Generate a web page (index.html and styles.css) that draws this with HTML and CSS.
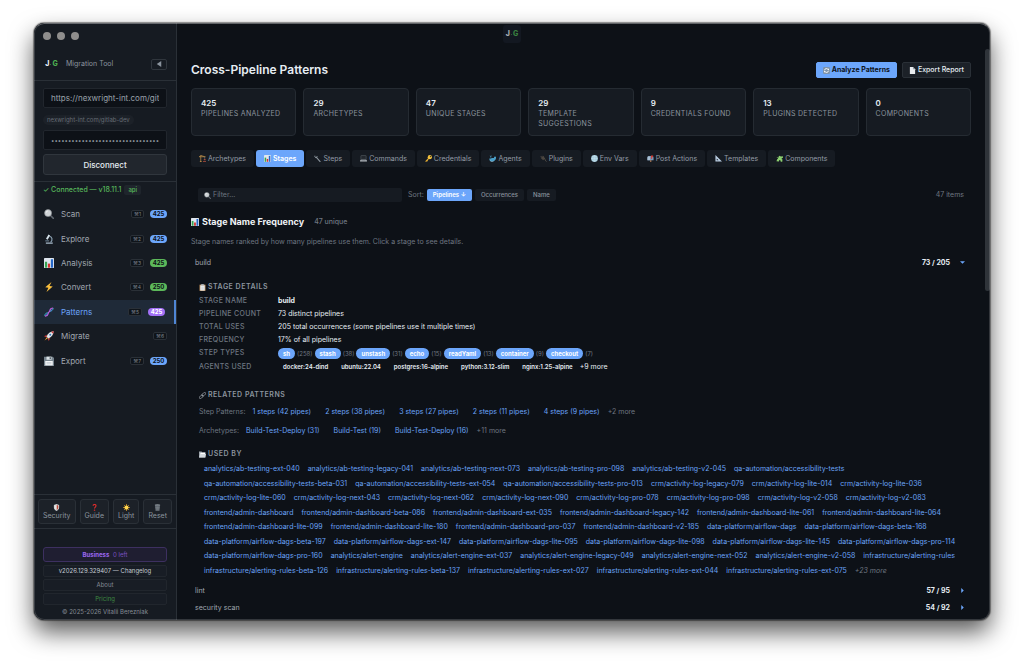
FILE: index.html
```html
<!DOCTYPE html>
<html lang="en">
<head>
<meta charset="utf-8">
<title>Migration Tool</title>
<meta name="viewport" content="width=device-width, initial-scale=1">
<link rel="stylesheet" href="styles.css">
</head>
<body>
<svg class="sprite" aria-hidden="true">
  <symbol id="i-search" viewBox="0 0 16 16"><path d="M10 10l5 5" stroke="#5f666e" stroke-width="2.4" stroke-linecap="round"/><circle cx="6.5" cy="6.5" r="5.6" fill="#cfd3d6" stroke="#8d9297" stroke-width="1"/><path d="M3.5 6a3 3 0 0 1 3-3" stroke="#fff" fill="none"/></symbol>
  <symbol id="i-micro" viewBox="0 0 16 16"><path d="M3 14.5h11" stroke="#a9bccb" stroke-width="2"/><path d="M9 3.5c4 1 5.500 6.500 1.500 10" stroke="#8fa6b8" stroke-width="1.800" fill="none"/><path d="M8.500 1.500l-4 7" stroke="#d6e2ea" stroke-width="3"/><path d="M2 11h6" stroke="#71899c" stroke-width="1.500"/></symbol>
  <symbol id="i-chart" viewBox="0 0 16 16"><rect width="16" height="16" rx="1" fill="#dfe6ee"/><rect x="1.500" y="6" width="3.500" height="9.500" fill="#35a552"/><rect x="6.200" y="9" width="3.500" height="6.500" fill="#d6322f"/><rect x="11" y="2" width="3.500" height="13.500" fill="#2467c9"/></symbol>
  <symbol id="i-bolt" viewBox="0 0 16 16"><path d="M12 0L2 8.500l5 .6L4 16l10-9-5.200-.7z" fill="#fbbf3c"/></symbol>
  <symbol id="i-dna" viewBox="0 0 16 16"><path d="M1.500 14.500C1 8.500 6 10.500 8 8s6.500-1 6.500-6.500" stroke="#35b5d8" stroke-width="1.600" fill="none"/><path d="M1.500 14.500C8 15 5.500 10 8 8s0-6.500 6.500-6.500" stroke="#c45bd8" stroke-width="1.800" fill="none"/><path d="M3 11.500l2.500 2M10.500 3.500l2.500 2M9 5.500l2.500 1.700M4.500 10l2 1.700" stroke="#6a8cf5"/></symbol>
  <symbol id="i-rocket" viewBox="0 0 16 16"><path d="M4 7L1 8.500l3 1zM9 12l-1.500 3-1-3z" fill="#d13a3a" stroke="#d13a3a"/><path d="M15.500.5C10 1 6 4 4 9l3 3c5-2 8-6 8.500-11.500z" fill="#e3e7ea"/><path d="M15.500.5c-1.500.1-3 .5-4 1l3 3c.5-1.300.9-2.500 1-4z" fill="#d13a3a"/><circle cx="10" cy="6" r="1.600" fill="#3679b8"/><path d="M4.500 10L1 15l5-3.500z" fill="#f9a82c"/></symbol>
  <symbol id="i-disk" viewBox="0 0 16 16"><path d="M0 1h14l2 2v13H0z" fill="#76838d"/><rect x="4" y="1" width="8" height="5" fill="#dce3e8"/><rect x="9" y="2" width="2" height="3" fill="#4b565e"/><rect x="2" y="8" width="12" height="7" fill="#f4f6f7"/><path d="M4 10.500h8M4 12.500h8" stroke="#b4bec5"/></symbol>
  <symbol id="i-shield" viewBox="0 0 16 16"><path d="M8 0l6 2v6c0 4-3 6.500-6 8-3-1.500-6-4-6-8V2z" fill="#cdd2d6"/><path d="M8 2l4 1.300V8c0 3-2 4.800-4 6z" fill="#bb4433"/><path d="M8 2L4 3.300V8c0 3 2 4.800 4 6z" fill="#e9e4e0"/></symbol>
  <symbol id="i-question" viewBox="0 0 16 16"><path d="M5 4c0-4 6.500-3.500 6.500 0 0 3-3.500 3-3.500 6.500" stroke="#e12d2d" stroke-width="2.600" fill="none"/><circle cx="8" cy="14" r="1.700" fill="#e12d2d"/></symbol>
  <symbol id="i-sun" viewBox="0 0 16 16"><path d="M8 0v16M0 8h16M2.500 2.500l11 11M13.500 2.500l-11 11" stroke="#f6a623" stroke-width="1.500"/><circle cx="8" cy="8" r="4.600" fill="#ffd54d"/></symbol>
  <symbol id="i-trash" viewBox="0 0 16 16"><path d="M2 2h12l-1.500 14h-9z" fill="#596068"/><ellipse cx="8" cy="2" rx="6.500" ry="1.600" fill="#8c949b"/><path d="M5 5l.5 9M8 5v9M11 5l-.5 9M3 8h10M3.500 11h9" stroke="#858d94" stroke-width=".8"/></symbol>
  <symbol id="i-refresh" viewBox="0 0 16 16"><rect width="16" height="16" rx="3" fill="#7d93ab"/><path d="M3.500 7.500A4.500 4.500 0 0 1 12 6M12.500 8.500A4.500 4.500 0 0 1 4 10" stroke="#fff" stroke-width="2" fill="none"/><path d="M13.500 3v4h-4zM2.500 13V9h4z" fill="#fff"/></symbol>
  <symbol id="i-page" viewBox="0 0 16 16"><path d="M2 0h7l5 5v11H2z" fill="#e9ecef"/><path d="M9 0v5h5z" fill="#9aa2aa"/></symbol>
  <symbol id="i-crane" viewBox="0 0 16 16"><path d="M4 15V1M0 4h15M4 1l9 3M4 1L1 4" stroke="#bd8f4a" stroke-width="1.700" fill="none"/><path d="M13 4v5" stroke="#909498"/><path d="M2 15h4" stroke="#c49247" stroke-width="2"/><rect x="11" y="9" width="4" height="3" fill="#a54c3d"/><path d="M9 15h7" stroke="#a54c3d" stroke-width="2"/></symbol>
  <symbol id="i-wrench" viewBox="0 0 16 16"><path d="M5 5l9 10" stroke="#8d969e" stroke-width="2.400" stroke-linecap="round"/><path d="M2 1.500v3l2.500 2L7 5V2.500" stroke="#8d969e" stroke-width="2" fill="none"/></symbol>
  <symbol id="i-laptop" viewBox="0 0 16 16"><rect x="2" y="1" width="12" height="9" rx="1" fill="#23282e" stroke="#69727a"/><path d="M1 11h14l1 4H0z" fill="#b5bbc0"/><path d="M3 12.500h10" stroke="#59616a"/></symbol>
  <symbol id="i-key" viewBox="0 0 16 16"><path d="M9 7l-7.500 8M4 12l2 2" stroke="#e6ad31" stroke-width="2.800"/><circle cx="11" cy="5" r="4.800" fill="#f4c23d"/><circle cx="12.300" cy="3.700" r="1.300" fill="#161b22"/></symbol>
  <symbol id="i-whale" viewBox="0 0 16 16"><path d="M1 8c4 1 5-2 9-1 2 .5 2-2 1-3 3 0 5 1 5-1 1 4-1 12-9 12C3 15 0 12 1 8z" fill="#4b9fc8"/><path d="M2 12c3 3 7 2 9 1-2 3-7 3-9-1z" fill="#d8edf6"/><path d="M4 6V3M2 2l2 1 2-1" stroke="#62b8df" stroke-width="1.300" fill="none"/></symbol>
  <symbol id="i-plug" viewBox="0 0 16 16"><path d="M1 5l3-3M4 8l4-5" stroke="#695f58" stroke-width="1.500"/><path d="M2 6l5-4 5 6-5 4z" fill="#4b453f"/><path d="M10 9c4 1 1 5 5 6" stroke="#6b6259" stroke-width="1.500" fill="none"/></symbol>
  <symbol id="i-globe" viewBox="0 0 16 16"><circle cx="8" cy="8" r="7.800" fill="#9fc6da"/><path d="M.5 8h15M8 .5v15M2 4h12M2 12h12" stroke="#d9edf5" stroke-width=".7"/><ellipse cx="8" cy="8" rx="4" ry="7.500" fill="none" stroke="#d9edf5" stroke-width=".7"/></symbol>
  <symbol id="i-mail" viewBox="0 0 16 16"><path d="M7 9h3v7H7z" fill="#9b6c4c"/><path d="M1 6a4 4 0 0 1 4-4h6a4 4 0 0 1 4 4v6H1z" fill="#7896b5"/><path d="M1 12V6a3 3 0 0 1 6 0v6z" fill="#a9c0d4"/><path d="M9 9V1h5v4h-3v4z" fill="#d33f35"/></symbol>
  <symbol id="i-ruler" viewBox="0 0 16 16"><path fill-rule="evenodd" d="M1 0l15 15H1zm3 8v4h4z" fill="#b8cce0"/></symbol>
  <symbol id="i-puzzle" viewBox="0 0 16 16"><path d="M2 4l4 2c-1-4 4-6 5-2l4-2 1 5c-4-1-4 3-1 3l-1 6-4-2c1-4-4-3-3 1l-6-1 2-5c3 0 2-4-1-3z" fill="#8cd070"/></symbol>
  <symbol id="i-clip" viewBox="0 0 16 16"><rect x="1" y="1" width="14" height="15" rx="1" fill="#a77e50"/><rect x="3" y="3" width="10" height="12" fill="#f1f3f4"/><rect x="5" width="6" height="3" fill="#9fa6ac"/><path d="M5 7h6M5 9.500h6M5 12h6" stroke="#b1b8be"/></symbol>
  <symbol id="i-link" viewBox="0 0 16 16"><rect x="6" y="2.500" width="10" height="5" rx="2.500" transform="rotate(-45 11 5)" fill="none" stroke="#abb3ba" stroke-width="1.600"/><rect x="0" y="8.500" width="10" height="5" rx="2.500" transform="rotate(-45 5 11)" fill="none" stroke="#abb3ba" stroke-width="1.600"/></symbol>
  <symbol id="i-folder" viewBox="0 0 16 16"><path d="M0 1h6l1 2h8v12H0z" fill="#9da5ac"/><path d="M3 4h11v5H3z" fill="#fff"/><path d="M3 7h13l-2 8H0z" fill="#d5dade"/></symbol>
</svg>

<div class="window">
  <aside class="sidebar">
    <div class="traffic"><span></span><span></span><span></span></div>
    <div class="brand">
      <span class="logo"><b>J</b><i></i><b class="g">G</b></span>
      <span class="brand-name">Migration Tool</span>
      <button class="collapse" aria-label="Collapse sidebar"><svg viewBox="0 0 8 8"><path d="M7 0v8L1 4z"/></svg></button>
    </div>
    <form class="connection">
      <input class="field" type="text" aria-label="GitLab URL" value="https://nexwright-int.com/gitlab-dev">
      <span class="host">nexwright-int.com/gitlab-dev</span>
      <input class="field secret" type="password" aria-label="Access token" value="aaaaaaaaaaaaaaaaaaaaaaaaaaaaaaaaaaaaaaaaaaaaaaaa">
      <button class="disconnect" type="button">Disconnect</button>
    </form>
    <div class="status">✓ Connected — v18.11.1 <span>api</span></div>
    <nav class="nav">
      <a href="#scan"><svg><use href="#i-search"/></svg><span>Scan</span><kbd>⌘1</kbd><em class="blue">425</em></a>
      <a href="#explore"><svg><use href="#i-micro"/></svg><span>Explore</span><kbd>⌘2</kbd><em class="blue">425</em></a>
      <a href="#analysis"><svg><use href="#i-chart"/></svg><span>Analysis</span><kbd>⌘3</kbd><em class="green">425</em></a>
      <a href="#convert"><svg><use href="#i-bolt"/></svg><span>Convert</span><kbd>⌘4</kbd><em class="green">250</em></a>
      <a href="#patterns" class="active" aria-current="page"><svg><use href="#i-dna"/></svg><span>Patterns</span><kbd>⌘5</kbd><em class="purple">425</em></a>
      <a href="#migrate"><svg><use href="#i-rocket"/></svg><span>Migrate</span><kbd>⌘6</kbd></a>
      <a href="#export"><svg><use href="#i-disk"/></svg><span>Export</span><kbd>⌘7</kbd><em class="blue">250</em></a>
    </nav>
    <div class="tools">
      <button><svg><use href="#i-shield"/></svg>Security</button>
      <button><svg><use href="#i-question"/></svg>Guide</button>
      <button><svg><use href="#i-sun"/></svg>Light</button>
      <button><svg><use href="#i-trash"/></svg>Reset</button>
    </div>
    <footer class="about">
      <button class="plan"><b>Business</b> 0 left</button>
      <a class="version" href="#changelog">v2026.129.329407 — Changelog</a>
      <a href="#about">About</a>
      <a class="pricing" href="#pricing">Pricing</a>
      <small>© 2025-2026 Vitalii Berezniak</small>
    </footer>
  </aside>

  <main class="main">
    <header class="page-head">
      <h1>Cross-Pipeline Patterns</h1>
      <button class="btn primary"><svg><use href="#i-refresh"/></svg>Analyze Patterns</button>
      <button class="btn"><svg><use href="#i-page"/></svg>Export Report</button>
    </header>

    <section class="cards">
      <div><strong>425</strong><span>Pipelines Analyzed</span></div>
      <div><strong>29</strong><span>Archetypes</span></div>
      <div><strong>47</strong><span>Unique Stages</span></div>
      <div><strong>29</strong><span>Template Suggestions</span></div>
      <div><strong>9</strong><span>Credentials Found</span></div>
      <div><strong>13</strong><span>Plugins Detected</span></div>
      <div><strong>0</strong><span>Components</span></div>
    </section>

    <div class="tabs">
      <button><svg><use href="#i-crane"/></svg>Archetypes</button>
      <button class="on"><svg><use href="#i-chart"/></svg>Stages</button>
      <button><svg><use href="#i-wrench"/></svg>Steps</button>
      <button><svg><use href="#i-laptop"/></svg>Commands</button>
      <button><svg><use href="#i-key"/></svg>Credentials</button>
      <button><svg><use href="#i-whale"/></svg>Agents</button>
      <button><svg><use href="#i-plug"/></svg>Plugins</button>
      <button><svg><use href="#i-globe"/></svg>Env Vars</button>
      <button><svg><use href="#i-mail"/></svg>Post Actions</button>
      <button><svg><use href="#i-ruler"/></svg>Templates</button>
      <button><svg><use href="#i-puzzle"/></svg>Components</button>
    </div>

    <div class="toolbar">
      <label class="filter"><svg><use href="#i-search"/></svg><input type="text" placeholder="Filter..." aria-label="Filter"></label>
      <span class="sort-label">Sort:</span>
      <button class="on">Pipelines ↓</button>
      <button>Occurrences</button>
      <button>Name</button>
      <span class="total">47 items</span>
    </div>

    <div class="section-head">
      <svg><use href="#i-chart"/></svg>
      <h2>Stage Name Frequency</h2>
      <span>47 unique</span>
    </div>
    <p class="intro">Stage names ranked by how many pipelines use them. Click a stage to see details.</p>

    <div class="stage"><span>build</span><b>73 / 205</b><svg viewBox="0 0 8 8"><path d="M0 2h8L4 6z"/></svg></div>

    <div class="detail">
      <h3><svg><use href="#i-clip"/></svg>Stage Details</h3>
      <dl>
        <dt>Stage Name</dt><dd><b>build</b></dd>
        <dt>Pipeline Count</dt><dd>73 distinct pipelines</dd>
        <dt>Total Uses</dt><dd>205 total occurrences (some pipelines use it multiple times)</dd>
        <dt>Frequency</dt><dd>17% of all pipelines</dd>
        <dt>Step Types</dt>
        <dd class="types"><mark>sh</mark><i>(258)</i><mark>stash</mark><i>(38)</i><mark>unstash</mark><i>(31)</i><mark>echo</mark><i>(15)</i><mark>readYaml</mark><i>(13)</i><mark>container</mark><i>(9)</i><mark>checkout</mark><i>(7)</i></dd>
        <dt>Agents Used</dt>
        <dd class="agents"><b>docker:24-dind</b><b>ubuntu:22.04</b><b>postgres:16-alpine</b><b>python:3.12-slim</b><b>nginx:1.25-alpine</b><span>+9 more</span></dd>
      </dl>

      <h3 class="related-head"><svg><use href="#i-link"/></svg>Related Patterns</h3>
      <div class="related"><span>Step Patterns:</span><a href="#p1">1 steps (42 pipes)</a><a href="#p2">2 steps (38 pipes)</a><a href="#p3">3 steps (27 pipes)</a><a href="#p4">2 steps (11 pipes)</a><a href="#p5">4 steps (9 pipes)</a><em>+2 more</em></div>
      <div class="related"><span>Archetypes:</span><a href="#a1">Build-Test-Deploy (31)</a><a href="#a2">Build-Test (19)</a><a href="#a3">Build-Test-Deploy (16)</a><em>+11 more</em></div>

      <h3 class="used-head"><svg><use href="#i-folder"/></svg>Used By</h3>
      <div class="used">
        <a href="#u">analytics/ab-testing-ext-040</a>
        <a href="#u">analytics/ab-testing-legacy-041</a>
        <a href="#u">analytics/ab-testing-next-073</a>
        <a href="#u">analytics/ab-testing-pro-098</a>
        <a href="#u">analytics/ab-testing-v2-045</a>
        <a href="#u">qa-automation/accessibility-tests</a>
        <a href="#u">qa-automation/accessibility-tests-beta-031</a>
        <a href="#u">qa-automation/accessibility-tests-ext-054</a>
        <a href="#u">qa-automation/accessibility-tests-pro-013</a>
        <a href="#u">crm/activity-log-legacy-079</a>
        <a href="#u">crm/activity-log-lite-014</a>
        <a href="#u">crm/activity-log-lite-036</a>
        <a href="#u">crm/activity-log-lite-060</a>
        <a href="#u">crm/activity-log-next-043</a>
        <a href="#u">crm/activity-log-next-062</a>
        <a href="#u">crm/activity-log-next-090</a>
        <a href="#u">crm/activity-log-pro-078</a>
        <a href="#u">crm/activity-log-pro-098</a>
        <a href="#u">crm/activity-log-v2-058</a>
        <a href="#u">crm/activity-log-v2-083</a>
        <a href="#u">frontend/admin-dashboard</a>
        <a href="#u">frontend/admin-dashboard-beta-086</a>
        <a href="#u">frontend/admin-dashboard-ext-035</a>
        <a href="#u">frontend/admin-dashboard-legacy-142</a>
        <a href="#u">frontend/admin-dashboard-lite-061</a>
        <a href="#u">frontend/admin-dashboard-lite-064</a>
        <a href="#u">frontend/admin-dashboard-lite-099</a>
        <a href="#u">frontend/admin-dashboard-lite-180</a>
        <a href="#u">frontend/admin-dashboard-pro-037</a>
        <a href="#u">frontend/admin-dashboard-v2-185</a>
        <a href="#u">data-platform/airflow-dags</a>
        <a href="#u">data-platform/airflow-dags-beta-168</a>
        <a href="#u">data-platform/airflow-dags-beta-197</a>
        <a href="#u">data-platform/airflow-dags-ext-147</a>
        <a href="#u">data-platform/airflow-dags-lite-095</a>
        <a href="#u">data-platform/airflow-dags-lite-098</a>
        <a href="#u">data-platform/airflow-dags-lite-145</a>
        <a href="#u">data-platform/airflow-dags-pro-114</a>
        <a href="#u">data-platform/airflow-dags-pro-160</a>
        <a href="#u">analytics/alert-engine</a>
        <a href="#u">analytics/alert-engine-ext-037</a>
        <a href="#u">analytics/alert-engine-legacy-049</a>
        <a href="#u">analytics/alert-engine-next-052</a>
        <a href="#u">analytics/alert-engine-v2-058</a>
        <a href="#u">infrastructure/alerting-rules</a>
        <a href="#u">infrastructure/alerting-rules-beta-126</a>
        <a href="#u">infrastructure/alerting-rules-beta-137</a>
        <a href="#u">infrastructure/alerting-rules-ext-027</a>
        <a href="#u">infrastructure/alerting-rules-ext-044</a>
        <a href="#u">infrastructure/alerting-rules-ext-075</a>
        <em>+23 more</em>
      </div>
    </div>

    <div class="stage"><span>lint</span><b>57 / 95</b><svg viewBox="0 0 8 8"><path d="M2 0v8l4-4z"/></svg></div>
    <div class="stage"><span>security scan</span><b>54 / 92</b><svg viewBox="0 0 8 8"><path d="M2 0v8l4-4z"/></svg></div>
  </main>

  <div class="logo title-logo"><b>J</b><i></i><b class="g">G</b></div>
  <div class="scrollbar"></div>
</div>
</body>
</html>
```

FILE: styles.css
```css
* { box-sizing: border-box; }

body {
  margin: 0;
  min-height: 100vh;
  padding: 23px 34px 45px;
  display: flex;
  background: #fff;
  color: #e6edf3;
  font: 7px/10px Inter, "Open Sans", sans-serif;
}

button, input { font: inherit; color: inherit; margin: 0; }
button { cursor: pointer; }
a { color: inherit; text-decoration: none; }
em, i { font-style: normal; }
.sprite { position: absolute; width: 0; height: 0; }

.window {
  position: relative;
  flex: 1;
  min-width: 0;
  display: grid;
  grid-template-columns: 143px 1fr;
  background: #0d1117;
  border-radius: 10px;
  overflow: hidden;
  box-shadow: 0 0 1px 1px rgba(0, 0, 0, .4), 0 12px 24px rgba(0, 0, 0, .65);
}
.window::after {
  content: "";
  position: absolute;
  inset: 0;
  border: 1px solid rgba(255, 255, 255, .16);
  border-top-color: rgba(255, 255, 255, .35);
  border-radius: 10px;
  pointer-events: none;
}

/* Sidebar */
.sidebar {
  display: flex;
  flex-direction: column;
  background: #161b22;
  border-right: 1px solid #2a3037;
}
.traffic { display: flex; gap: 6px; padding: 9px 9px 0; }
.traffic span { width: 8px; height: 8px; border-radius: 50%; background: #8f8e8d; }

.brand {
  display: flex;
  align-items: center;
  height: 41px;
  padding: 8px 9px 0;
  border-bottom: 1px solid #2a3037;
}
.logo { display: flex; align-items: center; justify-content: center; gap: 1px; width: 17px; height: 17px; font-size: 7px; line-height: 8px; }
.logo b { font-weight: 800; }
.logo i { width: 1px; height: 1px; background: #3b6b45; }
.logo .g { color: #4caf50; }
.brand-name { margin-left: 6px; color: #8b949e; }
.collapse {
  display: grid;
  place-items: center;
  width: 16px;
  height: 11px;
  margin-left: auto;
  padding: 0;
  background: none;
  border: 1px solid #30363d;
  border-radius: 2px;
}
.collapse svg { width: 6px; height: 6px; fill: #8b949e; }

.connection {
  display: flex;
  flex-direction: column;
  align-items: stretch;
  padding: 7px 9px 6px;
  border-bottom: 1px solid #2a3037;
}
.field {
  width: 100%;
  height: 20px;
  padding: 0 7px;
  background: #0d1117;
  border: 1px solid #21262d;
  border-radius: 2px;
  color: #9aa1aa;
  font-size: 8px;
}
.secret { font-size: 6px; }
.host {
  align-self: flex-start;
  margin: 7px 0 5px;
  padding: 0 4px;
  border-radius: 5px;
  background: #1c2128;
  color: #656c75;
  font-size: 6px;
}
.disconnect {
  height: 21px;
  margin-top: 4px;
  padding: 0;
  background: #21262d;
  border: 1px solid #30363d;
  border-radius: 3px;
  font-size: 8px;
  font-weight: 500;
}

.status { display: flex; gap: 3px; align-items: center; height: 20px; padding: 0 9px 5px; color: #56b65b; font-weight: 500; }
.status span { padding: 0 4px; background: #1f252c; border-radius: 2px; font-size: 6px; }

.nav { display: grid; grid-auto-rows: 1fr; min-height: 171px; }
.nav a { display: flex; align-items: center; padding: 0 9px 0 10px; color: #a0a7b0; font-size: 8px; }
.nav a > svg { width: 10px; height: 10px; margin-right: 7px; }
.nav a > span { flex: 1; }
.nav kbd {
  padding: 0 2px;
  background: #0f141a;
  border: 1px solid #2a3037;
  border-radius: 2px;
  color: #7d848d;
  font: 5px/6px Inter, "DejaVu Sans", sans-serif;
}
.nav em { width: 17px; margin-left: 6px; border-radius: 4px; color: #0d1117; font-size: 6px; line-height: 8px; font-weight: 700; text-align: center; }
.blue { background: #6ca6fb; }
.green { background: #5cb85a; }
.nav .purple { background: #a371f7; color: #fff; }
.nav .active { background: #1f2a38; border-right: 2px solid #4f86d6; color: #6ba4f8; }

.tools { display: flex; justify-content: space-between; gap: 3px; margin-top: auto; padding: 4px; border-top: 1px solid #2a3037; border-bottom: 1px solid #2a3037; }
.tools button {
  display: flex;
  flex-direction: column;
  align-items: center;
  justify-content: center;
  height: 25px;
  padding: 0 4px;
  background: #1c2128;
  border: 1px solid #2a3037;
  border-radius: 3px;
  color: #8b949e;
}
.tools svg { width: 7px; height: 7px; margin-top: 1px; }

.about { display: flex; flex-direction: column; gap: 2px; padding: 18px 9px 3px; text-align: center; color: #848b94; font-size: 6px; }
.about button, .about a { border: 1px solid #21262d; border-radius: 2px; background: #181d25; }
.about .plan { height: 15px; margin-bottom: 1px; padding: 0; background: #1f1e31; border-color: #3d3060; border-radius: 3px; color: #7a51c2; }
.about b { color: #9a67ee; margin-right: 2px; }
.about .version { color: #c5ccd4; }
.about .pricing { color: #3f8a43; }
.about small { font-size: 6px; }

/* Main column */
.main { min-width: 0; padding: 38px 19px 4px 14px; }
.title-logo { position: absolute; top: 2px; left: calc(50% - 9px); width: 18px; height: 18px; border-radius: 3px; background: #161b26; opacity: .7; }
.scrollbar { position: absolute; top: 26px; right: 0; width: 5px; height: 242px; border-radius: 3px; background: #2f343a; }

.page-head { display: flex; align-items: center; gap: 5px; height: 18px; }
h1 { flex: 1; margin: 0; font-size: 12px; line-height: 18px; font-weight: 600; }
.btn {
  display: flex;
  align-items: center;
  gap: 2px;
  height: 16px;
  padding: 0 6px;
  background: #1c2128;
  border: 1px solid #2a3037;
  border-radius: 2px;
  font-weight: 500;
}
.btn svg { width: 7px; height: 7px; }
.primary { background: #6ca6fb; border-color: #6ca6fb; color: #0d1117; font-weight: 700; }

.cards { display: grid; grid-template-columns: repeat(7, 1fr); gap: 7px; margin-top: 9px; }
.cards div { min-height: 48px; padding: 9px 9px 6px; background: #161b22; border: 1px solid #252b32; border-radius: 4px; }
.cards strong { display: block; margin-bottom: 1px; font-size: 8px; font-weight: 600; }
.cards span { color: #8b949e; letter-spacing: .3px; text-transform: uppercase; }

.tabs { display: flex; gap: 2px; margin-top: 14px; }
.tabs button {
  display: flex;
  align-items: center;
  gap: 2px;
  height: 17px;
  padding: 0 8px;
  background: #161b22;
  border: 0;
  border-radius: 3px;
  color: #949ca6;
}
.tabs svg { width: 7px; height: 7px; }
.tabs .on, .toolbar .on { background: #6ca6fb; color: #fff; font-weight: 600; }

.toolbar { display: flex; align-items: center; gap: 3px; margin-top: 21px; padding: 0 7px; color: #6e7681; }
.filter { display: flex; align-items: center; gap: 2px; width: 204px; height: 14px; padding: 0 6px; background: #161b22; border-radius: 2px; }
.filter svg { width: 7px; height: 7px; }
.filter input { flex: 1; min-width: 0; padding: 0; background: none; border: 0; }
.filter input::placeholder { color: #6e7681; }
.sort-label { margin-left: 3px; }
.toolbar button { height: 12px; padding: 0 6px; background: #161b22; border: 0; border-radius: 2px; color: #8b949e; font-size: 6px; font-weight: 500; }
.total { margin-left: auto; }

.section-head { display: flex; align-items: center; gap: 3px; height: 14px; margin-top: 13px; color: #6e7681; font-weight: 500; }
.section-head svg { width: 8px; height: 8px; }
h2 { margin: 0 7px 0 0; font-size: 9px; font-weight: 700; color: #f0f3f6; }
.intro { margin: 8px 0 7px; color: #6e7681; }

.stage { display: flex; align-items: center; height: 17px; padding: 0 6px 0 4px; color: #a0a7b0; }
.stage span { flex: 1; }
.stage b { color: #e6edf3; }
.stage svg { width: 5px; height: 5px; margin-left: 10px; fill: #6ca6fb; }

.detail { padding: 11px 0 4px 8px; }
h3 { display: flex; align-items: center; gap: 2px; margin: 0; color: #8b949e; font-size: 7px; font-weight: 600; letter-spacing: .5px; text-transform: uppercase; }
h3 svg { width: 7px; height: 7px; }
dl { display: grid; grid-template-columns: 79px 1fr; row-gap: 3px; margin: 4px 0 0; }
dt { color: #6e7681; letter-spacing: .3px; text-transform: uppercase; font-weight: 500; }
dd { margin: 0; }
.types, .agents { display: flex; align-items: center; }
.types mark { padding: 0 5px; border-radius: 6px; background: #6ca6fb; color: #fff; font-size: 6px; line-height: 11px; font-weight: 700; }
.types i { margin: 0 2px; color: #6e7681; font-size: 6px; }
.agents { padding-left: 5px; }
.agents b { margin-right: 13px; font-size: 6px; font-weight: 600; }
.agents b:last-of-type { margin-right: 7px; }
.related-head { margin-top: 18px; }
.related { display: flex; margin-top: 9px; color: #6ba4f8; }
h3 + .related { margin-top: 7px; }
.related span { margin-right: 7px; color: #6e7681; }
.related a { margin-right: 14px; }
.related em { color: #6e7681; }
.related a:last-of-type { margin-right: 8px; }
.used-head { margin-top: 13px; }
.used { display: flex; flex-wrap: wrap; align-items: center; column-gap: 8px; min-height: 116px; margin-top: 3px; padding-left: 5px; color: #6ba4f8; }
.used em { color: #6e7681; font-style: italic; }
```
